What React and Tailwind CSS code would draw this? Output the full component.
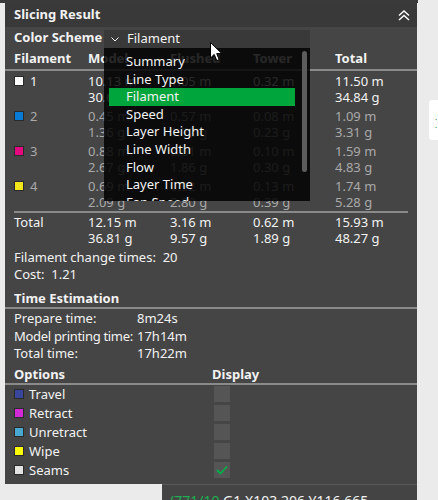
import { Fragment } from 'react';

const FONT = "font-['Noto_Sans',sans-serif]";

const FILAMENTS = [
  { id: 1, color: 'bg-white', dim: false, m: ['10.13 m', '1.05 m', '0.32 m', '11.50 m'], g: ['30.69 g', '3.18 g', '0.97 g', '34.84 g'] },
  { id: 2, color: 'bg-[#0a7bd4]', dim: true, m: ['0.45 m', '0.57 m', '0.08 m', '1.09 m'], g: ['1.36 g', '1.72 g', '0.23 g', '3.31 g'] },
  { id: 3, color: 'bg-[#e4097f]', dim: true, m: ['0.88 m', '0.61 m', '0.10 m', '1.59 m'], g: ['2.67 g', '1.86 g', '0.30 g', '4.83 g'] },
  { id: 4, color: 'bg-[#f3e51c]', dim: true, m: ['0.69 m', '0.92 m', '0.13 m', '1.74 m'], g: ['2.09 g', '2.80 g', '0.39 g', '5.28 g'] },
];

const OPTIONS = [
  { label: 'Travel', color: 'bg-[#38479b]', checked: false },
  { label: 'Retract', color: 'bg-[#d22ad6]', checked: false },
  { label: 'Unretract', color: 'bg-[#49a8cf]', checked: false },
  { label: 'Wipe', color: 'bg-[#ffff00]', checked: false },
  { label: 'Seams', color: 'bg-[#e3e3e3]', checked: true },
];

const SCHEMES = ['Summary', 'Line Type', 'Filament', 'Speed', 'Layer Height', 'Line Width', 'Flow', 'Layer Time', 'Fan Speed'];

const COLS = 'grid grid-cols-[74px_82px_83px_82px_1fr] pl-[9px]';

function Swatch({ className }) {
  return <span className={`inline-block w-[10px] h-[10px] border border-[#2a2a2a] ${className}`} />;
}

function SchemeDropdown() {
  return (
    <div className="absolute left-[99px] top-[27px] w-[206px]">
      <div className="h-[18px] bg-[#393939] flex items-center pl-[7px] gap-[8px] text-[#f2f2f2]">
        <svg width="8" height="5" viewBox="0 0 8 5" fill="none" stroke="currentColor" strokeWidth="1">
          <path d="M0.5 0.5 L4 4 L7.5 0.5" />
        </svg>
        <span>Filament</span>
      </div>
      <div className="relative h-[153px] overflow-hidden bg-black/[0.84] pt-[5px]">
        {SCHEMES.map((s) => (
          <div key={s} className="h-[17.6px] leading-[17.6px] px-[5px]">
            <div className={`pl-[17px] w-[186px] ${s === 'Filament' ? 'bg-[#00a63c]' : ''}`}>{s}</div>
          </div>
        ))}
        <div className="absolute right-[3px] top-[3px] w-[5px] h-[121px] rounded-full bg-[#5c5c5c]" />
      </div>
    </div>
  );
}

function Cursor() {
  return (
    <svg className="absolute left-[205px] top-[39px]" width="13" height="20" viewBox="0 0 13 20">
      <path d="M0.5 0.5 L0.5 16 L4.2 12.4 L6.8 18.6 L9.2 17.6 L6.7 11.6 L11.8 11.6 Z" fill="#fff" stroke="#000" strokeWidth="1" />
    </svg>
  );
}

export default function App() {
  return (
    <div className={`w-[438px] h-[500px] overflow-hidden bg-[#ebebeb] text-[13px] text-[#f2f2f2] ${FONT}`}>
      <div className="h-[3px] w-[418px] bg-[#3a3a3a]" />
      <div className="flex">
        <div className="w-[5px] shrink-0" />
        <div className="relative w-[412px] shrink-0 bg-[#454545] pb-[4px]">
          {/* title */}
          <div className="h-[24px] bg-[#393939] flex items-center justify-between pl-[9px] pr-[7px]">
            <span className="font-bold">Slicing Result</span>
            <svg width="12" height="11" viewBox="0 0 12 11" fill="none" stroke="#fff" strokeWidth="1.4">
              <path d="M1 5.5 L6 1 L11 5.5" />
              <path d="M1 10 L6 5.5 L11 10" />
            </svg>
          </div>

          <div className="h-[21px] flex items-center pl-[9px] font-bold">Color Scheme</div>

          <div className={`${COLS} h-[21px] items-center font-bold`}>
            <span>Filament</span>
            <span>Model</span>
            <span>Flushed</span>
            <span>Tower</span>
            <span>Total</span>
          </div>
          <div className="h-[2px] bg-[#8a8a8a]" />

          {FILAMENTS.map((f) => (
            <div key={f.id} className={`${COLS} pt-[2px] pb-[1px] leading-[16px] ${f.dim ? 'text-[#a9a9a9]' : ''}`}>
              <span className="flex items-center gap-[6px]">
                <Swatch className={f.color} />
                {f.id}
              </span>
              {f.m.map((v, i) => (
                <span key={i}>{v}</span>
              ))}
              <span />
              {f.g.map((v, i) => (
                <span key={i}>{v}</span>
              ))}
            </div>
          ))}

          <div className="mx-[9px] h-[2px] bg-[#8a8a8a]" />
          <div className={`${COLS} pt-[1px] leading-[16px]`}>
            <span>Total</span>
            <span>12.15 m</span>
            <span>3.16 m</span>
            <span>0.62 m</span>
            <span>15.93 m</span>
            <span />
            <span>36.81 g</span>
            <span>9.57 g</span>
            <span>1.89 g</span>
            <span>48.27 g</span>
          </div>

          <div className="pl-[9px] pt-[3px] leading-[17px]">
            <div>Filament change times:&nbsp; 20</div>
            <div>Cost:&nbsp; 1.21</div>
          </div>

          <div className="pl-[9px] mt-[6px] h-[18px] leading-[18px] font-bold">Time Estimation</div>
          <div className="h-[2px] bg-[#8a8a8a]" />
          <div className="grid grid-cols-[123px_1fr] pl-[9px] pt-[1px] leading-[17.5px] whitespace-nowrap">
            <span>Prepare time:</span>
            <span>8m24s</span>
            <span className="tracking-[-0.3px]">Model printing time:</span>
            <span>17h14m</span>
            <span>Total time:</span>
            <span>17h22m</span>
          </div>

          <div className="grid grid-cols-[198px_1fr] pl-[9px] mt-[2px] h-[18px] leading-[18px] font-bold">
            <span>Options</span>
            <span>Display</span>
          </div>
          <div className="h-[2px] bg-[#8a8a8a]" />
          <div className="pl-[9px]">
            {OPTIONS.map((o) => (
              <div key={o.label} className="grid grid-cols-[200px_1fr] h-[19px] items-center">
                <span className="flex items-center gap-[5px]">
                  <Swatch className={o.color} />
                  {o.label}
                </span>
                <span className="w-[16px] h-[16px] bg-[#555555] flex items-center justify-center">
                  {o.checked && (
                    <svg width="12" height="10" viewBox="0 0 12 10" fill="none" stroke="#00b04a" strokeWidth="1.8">
                      <path d="M1 5 L4.5 8.5 L11 1.5" />
                    </svg>
                  )}
                </span>
              </div>
            ))}
          </div>

          <SchemeDropdown />
          <Cursor />
        </div>
        <div className="flex-1 pt-[97px] pl-[12px]">
          <div className="h-[40px] bg-white rounded-l-[3px] text-[#1aa04a] text-[8px] leading-[8px] pt-[16px] pl-[6px]">
            <div>·</div>
            <div>·</div>
          </div>
        </div>
      </div>
      <div className="flex">
        <div className="w-[162px] shrink-0" />
        <div className="w-[255px] h-[20px] bg-[#444444] border-t border-[#5a5a5a] pl-[8px] pt-[7px] text-[14px] leading-[18px] whitespace-nowrap overflow-hidden">
          <span className="text-[#1fae50]">(771/10</span> G1 X103.206 Y116.665
        </div>
      </div>
    </div>
  );
}
